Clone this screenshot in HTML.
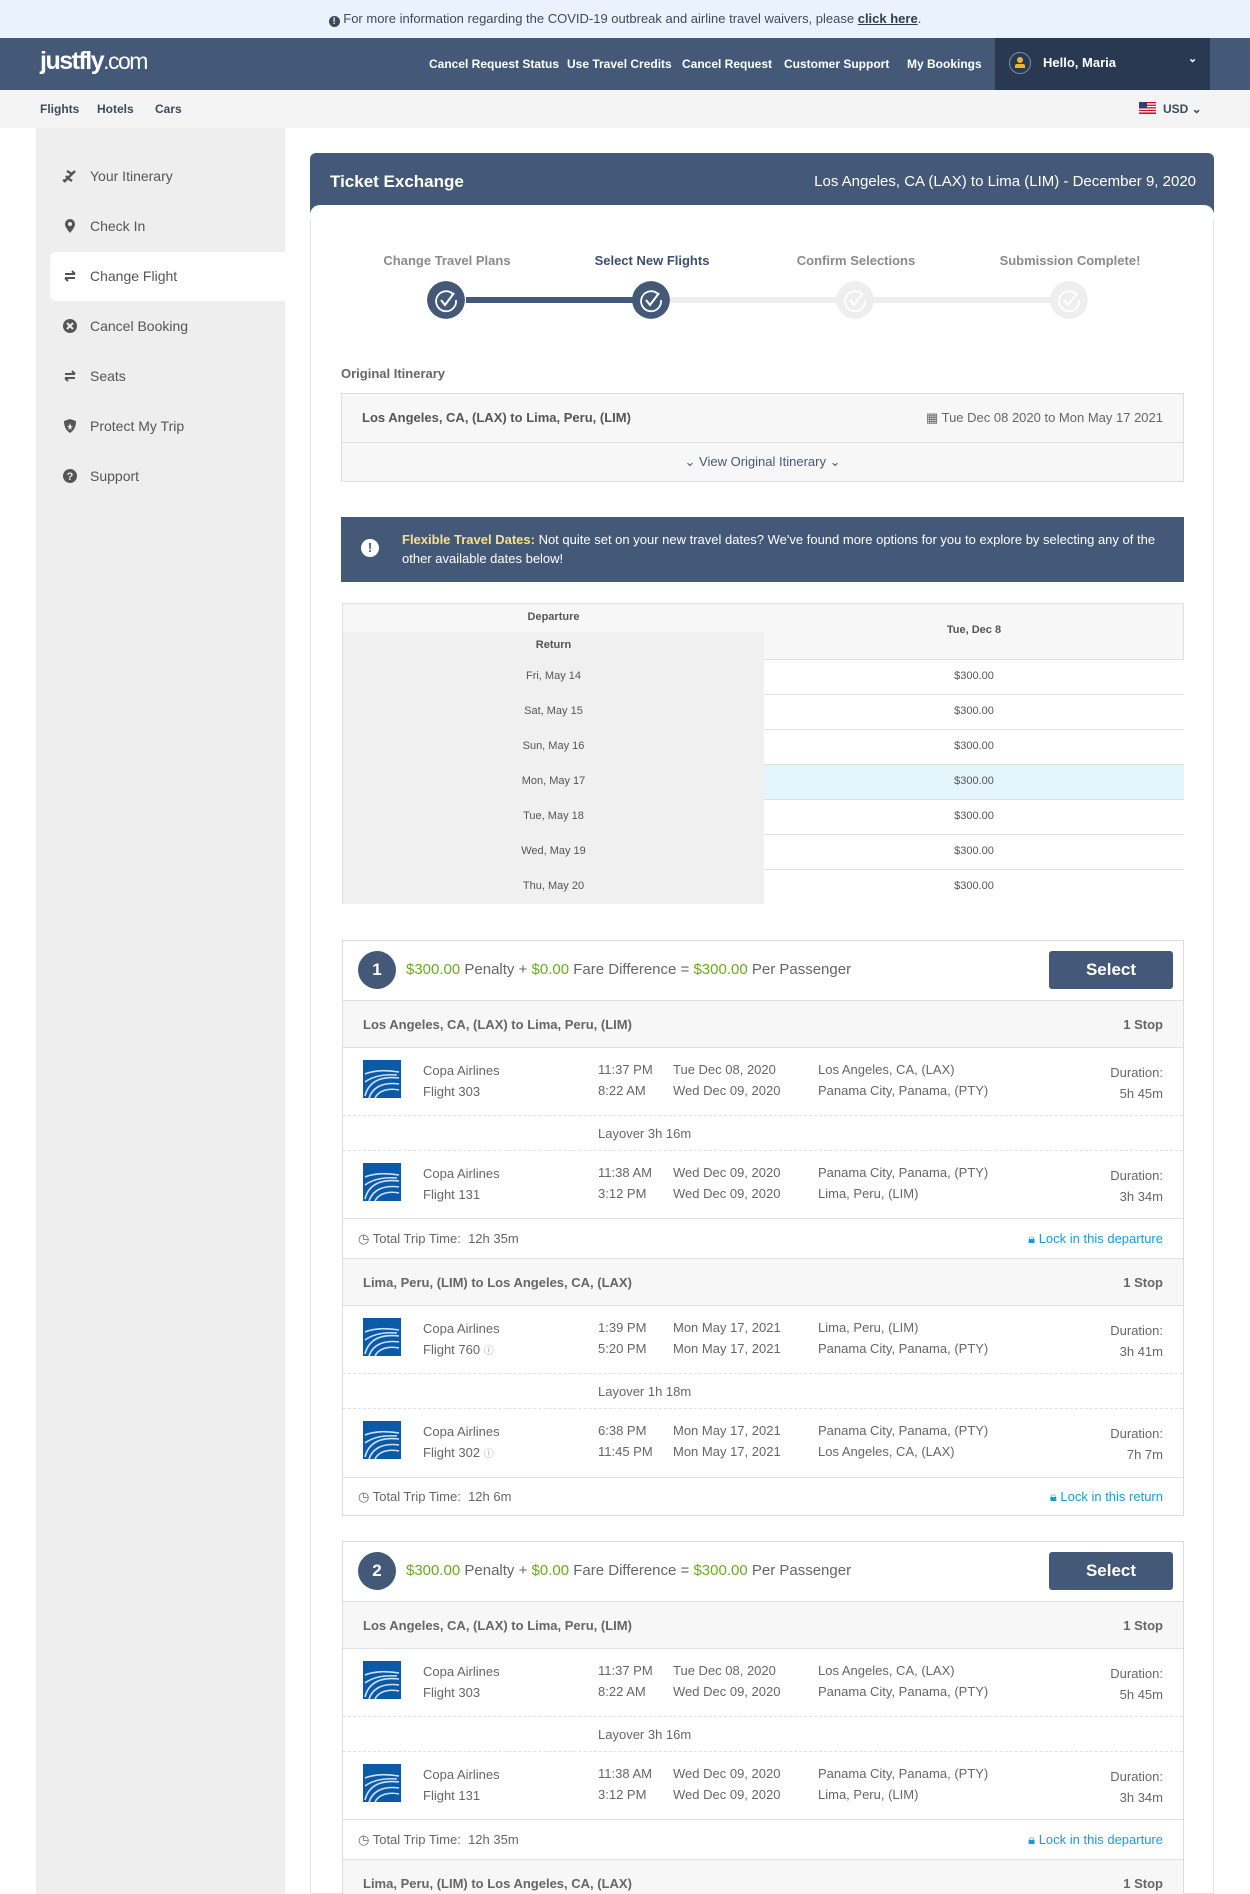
<!DOCTYPE html>
<html><head><meta charset="utf-8">
<style>
*{box-sizing:border-box;margin:0;padding:0}
html{width:1250px;height:1894px;overflow:hidden}
body{width:1250px;height:1894px;overflow:hidden;background:#fff;font-family:"Liberation Sans Narrow","Liberation Sans",sans-serif;color:#555;font-size:13px;position:relative}
.abs{position:absolute}
.banner{left:0;top:0;width:1250px;height:38px;background:#eaf3fd;color:#3d4a5c;font-size:13px;text-align:center;line-height:38px}
.banner b{text-decoration:underline;color:#2f3d52}
.nav{left:0;top:38px;width:1250px;height:52px;background:#445878}
.logo{left:40px;top:9px;color:#fff;font-family:"Liberation Sans",sans-serif;font-weight:bold;font-size:25px;letter-spacing:-1.5px}
.logo span{font-weight:normal;font-size:23px}
.nl{top:19px;color:#fff;font-weight:bold;font-size:12px}
.hello{left:995px;top:0;width:215px;height:52px;background:#2a3952;color:#fff;font-weight:bold;font-size:13px}
.sub{left:0;top:90px;width:1250px;height:38px;background:#f4f4f4;font-size:12px;color:#3d4a5c;font-weight:bold}
.side{left:36px;top:128px;width:249px;height:1766px;background:#eeeeee}
.si{left:90px;font-size:14px;color:#555}
.ic{left:62px;width:16px;height:16px}
.card{left:310px;top:153px;width:904px;height:1741px;border:1px solid #e4e4e4;border-radius:8px 8px 0 0;background:#fff}
.chead{left:310px;top:153px;width:904px;height:60px;background:#445878;border-radius:6px 6px 0 0;color:#fff}
.chead2{left:310px;top:205px;width:904px;height:14px;background:#fff;border-radius:10px 10px 0 0}
.stl{top:253px;font-weight:bold;font-size:13px;color:#8a8a8a;text-align:center;width:200px}
.circ{top:281px;width:38px;height:38px;border-radius:50%}
.box{border:1px solid #dedede;background:#f7f7f7}
.green{color:#6aaa1e}
.tbl{left:342px;top:603px;width:842px;height:301px;border:1px solid #e0e0e0}
.tc{position:absolute;text-align:center;font-size:11px;color:#555}
.opt{left:342px;width:842px;border:1px solid #dcdcdc;background:#fff;overflow:hidden}
.row{position:absolute;left:0;width:840px}
.gray{background:#f7f7f7;border-top:1px solid #e0e0e0;border-bottom:1px solid #e0e0e0}
.bold{font-weight:bold;color:#555}
.t{position:absolute;font-size:13px;color:#666;line-height:21px}
.lock{color:#1a9bd7}
.btn{position:absolute;right:10px;top:10px;width:124px;height:38px;background:#445878;border-radius:3px;color:#fff;font-weight:bold;font-size:17px;text-align:center;line-height:38px}
.num{position:absolute;left:15px;top:10px;width:38px;height:38px;border-radius:50%;background:#445878;color:#fff;font-size:17px;font-weight:bold;text-align:center;line-height:38px}
</style></head><body>

<div class="abs banner"><span style="display:inline-block;width:11px;height:11px;border-radius:50%;background:#3d4a5c;color:#fff;font-size:9px;line-height:11px;font-weight:bold;vertical-align:-1px">!</span> For more information regarding the COVID-19 outbreak and airline travel waivers, please <b>click here</b>.</div>

<div class="abs nav">
 <div class="abs logo">justfly<span>.com</span></div>
 <div class="abs nl" style="left:429px">Cancel Request Status</div>
 <div class="abs nl" style="left:567px">Use Travel Credits</div>
 <div class="abs nl" style="left:682px">Cancel Request</div>
 <div class="abs nl" style="left:784px">Customer Support</div>
 <div class="abs nl" style="left:907px">My Bookings</div>
 <div class="abs hello">
  <div class="abs" style="left:14px;top:14px;width:22px;height:22px;border:1px solid #8592a8;border-radius:50%"><div class="abs" style="left:7px;top:4px;width:6px;height:6px;background:#f0b429;border-radius:50%"></div><div class="abs" style="left:5px;top:11px;width:10px;height:4px;background:#f0b429;border-radius:2px 2px 0 0"></div></div>
  <div class="abs" style="left:48px;top:17px">Hello, Maria</div>
  <div class="abs" style="left:193px;top:14px;font-size:11px">&#8964;</div>
 </div>
</div>

<div class="abs sub">
 <div class="abs" style="left:40px;top:12px">Flights</div>
 <div class="abs" style="left:97px;top:12px">Hotels</div>
 <div class="abs" style="left:155px;top:12px">Cars</div>
 <svg class="abs" style="left:1139px;top:12px" width="17" height="12" viewBox="0 0 17 12"><rect width="17" height="12" fill="#fff"/><g fill="#c8102e"><rect y="0" width="17" height="1.3"/><rect y="2.6" width="17" height="1.3"/><rect y="5.2" width="17" height="1.3"/><rect y="7.8" width="17" height="1.3"/><rect y="10.4" width="17" height="1.6"/></g><rect width="8" height="6.5" fill="#3c3b6e"/></svg>
 <div class="abs" style="left:1163px;top:12px">USD &#8964;</div>
</div>

<div class="abs side"></div>
<div class="abs" style="left:50px;top:252px;width:235px;height:49px;background:#fff;border-radius:6px 0 0 6px"></div>
<svg class="abs ic" style="top:168px" viewBox="0 0 16 16"><path d="M2 14 L13 3 M5 3 L10 6 L7 9 M4 8 L7 11 L10 13 M3 12 L1 13" stroke="#555" stroke-width="2.4" fill="none"/></svg>
<div class="abs si" style="top:168px">Your Itinerary</div>
<svg class="abs ic" style="top:218px" viewBox="0 0 16 16"><path d="M8 15 C3 9 3 7 3 6 A5 5 0 0 1 13 6 C13 7 13 9 8 15Z" fill="#555"/><circle cx="8" cy="6" r="2" fill="#eee"/></svg>
<div class="abs si" style="top:218px">Check In</div>
<svg class="abs ic" style="top:268px" viewBox="0 0 16 16"><path d="M3 6 H13 M10 3 L13 6 M13 10 H3 M6 13 L3 10" stroke="#555" stroke-width="2" fill="none"/></svg>
<div class="abs si" style="top:268px">Change Flight</div>
<svg class="abs ic" style="top:318px" viewBox="0 0 16 16"><circle cx="8" cy="8" r="7" fill="#555"/><path d="M5 5 L11 11 M11 5 L5 11" stroke="#eee" stroke-width="2"/></svg>
<div class="abs si" style="top:318px">Cancel Booking</div>
<svg class="abs ic" style="top:368px" viewBox="0 0 16 16"><path d="M3 6 H13 M10 3 L13 6 M13 10 H3 M6 13 L3 10" stroke="#555" stroke-width="2" fill="none"/></svg>
<div class="abs si" style="top:368px">Seats</div>
<svg class="abs ic" style="top:418px" viewBox="0 0 16 16"><path d="M8 1 L14 3 C14 10 11 13 8 15 C5 13 2 10 2 3Z" fill="#555"/><path d="M8 5 L9 8 L11 8 L9 9.5 L10 12 L8 10.5 L6 12 L7 9.5 L5 8 L7 8Z" fill="#eee"/></svg>
<div class="abs si" style="top:418px">Protect My Trip</div>
<svg class="abs ic" style="top:468px" viewBox="0 0 16 16"><circle cx="8" cy="8" r="7" fill="#555"/><text x="8" y="12" font-size="11" font-weight="bold" fill="#eee" text-anchor="middle" font-family="Liberation Sans">?</text></svg>
<div class="abs si" style="top:468px">Support</div>

<div class="abs card"></div>
<div class="abs chead">
 <div class="abs" style="left:20px;top:19px;font-size:17px;font-weight:bold">Ticket Exchange</div>
 <div class="abs" style="right:18px;top:20px;font-size:15px">Los Angeles, CA (LAX) to Lima (LIM) - December 9, 2020</div>
</div>
<div class="abs chead2"></div>

<div class="abs" style="left:466px;top:297px;width:186px;height:6px;background:#445878"></div>
<div class="abs" style="left:652px;top:297px;width:418px;height:6px;background:#eeeeee"></div>
<div class="abs stl" style="left:347px">Change Travel Plans</div>
<div class="abs stl" style="left:552px;color:#3d4f6e">Select New Flights</div>
<div class="abs stl" style="left:756px">Confirm Selections</div>
<div class="abs stl" style="left:970px">Submission Complete!</div>
<svg class="abs circ" style="left:427px" viewBox="0 0 38 38"><circle cx="19" cy="19" r="19" fill="#445878"/><path d="M26 13 A10 10 0 1 0 29 19" stroke="#fff" stroke-width="1.8" fill="none"/><path d="M14 19 L18 24 L27 12" stroke="#fff" stroke-width="2" fill="none"/></svg>
<svg class="abs circ" style="left:632px" viewBox="0 0 38 38"><circle cx="19" cy="19" r="19" fill="#445878"/><path d="M26 13 A10 10 0 1 0 29 19" stroke="#fff" stroke-width="1.8" fill="none"/><path d="M14 19 L18 24 L27 12" stroke="#fff" stroke-width="2" fill="none"/></svg>
<svg class="abs circ" style="left:836px" viewBox="0 0 38 38"><circle cx="19" cy="19" r="19" fill="#eeeeee"/><path d="M26 13 A10 10 0 1 0 29 19" stroke="#fff" stroke-width="1.8" fill="none"/><path d="M14 19 L18 24 L27 12" stroke="#fff" stroke-width="2" fill="none"/></svg>
<svg class="abs circ" style="left:1050px" viewBox="0 0 38 38"><circle cx="19" cy="19" r="19" fill="#eeeeee"/><path d="M26 13 A10 10 0 1 0 29 19" stroke="#fff" stroke-width="1.8" fill="none"/><path d="M14 19 L18 24 L27 12" stroke="#fff" stroke-width="2" fill="none"/></svg>

<div class="abs" style="left:341px;top:366px;font-weight:bold;font-size:13px;color:#666">Original Itinerary</div>
<div class="abs box" style="left:341px;top:393px;width:843px;height:89px"></div>
<div class="abs" style="left:342px;top:442px;width:841px;height:1px;background:#dedede"></div>
<div class="abs bold" style="left:362px;top:410px">Los Angeles, CA, (LAX) to Lima, Peru, (LIM)</div>
<div class="abs" style="right:87px;top:410px;color:#666">&#9638; Tue Dec 08 2020 to Mon May 17 2021</div>
<div class="abs" style="left:342px;top:454px;width:841px;text-align:center;color:#445878">&#8964; View Original Itinerary &#8964;</div>

<div class="abs" style="left:341px;top:517px;width:843px;height:65px;background:#445878;color:#fff;font-size:13px">
 <div class="abs" style="left:20px;top:22px;width:18px;height:18px;border-radius:50%;background:#fff;color:#445878;font-weight:bold;text-align:center;line-height:18px">!</div>
 <div class="abs" style="left:61px;top:13px;width:770px;line-height:19px"><b style="color:#f8e08e">Flexible Travel Dates:</b> Not quite set on your new travel dates? We've found more options for you to explore by selecting any of the other available dates below!</div>
</div>

<div class="abs tbl">
 <div class="abs" style="left:0;top:0;width:840px;height:55px;background:#f7f7f7"></div>
 <div class="abs" style="left:0;top:28px;width:421px;height:272px;background:#f0f0f0"></div>
 <div class="tc" style="left:0;top:7px;width:421px;font-weight:bold">Departure</div>
 <div class="tc" style="left:0;top:35px;width:421px;font-weight:bold">Return</div>
 <div class="tc" style="left:421px;top:20px;width:420px;font-weight:bold">Tue, Dec 8</div>
 <div class="abs" style="left:421px;top:55px;width:420px;height:245px;background:#fff"></div>
 <div class="abs" style="left:421px;top:160px;width:420px;height:35px;background:#e5f5fc"></div>
 <div class="abs" style="left:421px;top:55px;width:420px;height:1px;background:#e0e0e0"></div>
 <div class="abs" style="left:421px;top:90px;width:420px;height:1px;background:#e0e0e0"></div>
 <div class="abs" style="left:421px;top:125px;width:420px;height:1px;background:#e0e0e0"></div>
 <div class="abs" style="left:421px;top:160px;width:420px;height:1px;background:#e0e0e0"></div>
 <div class="abs" style="left:421px;top:195px;width:420px;height:1px;background:#e0e0e0"></div>
 <div class="abs" style="left:421px;top:230px;width:420px;height:1px;background:#e0e0e0"></div>
 <div class="abs" style="left:421px;top:265px;width:420px;height:1px;background:#e0e0e0"></div>
 <div class="tc" style="left:0;top:66px;width:421px">Fri, May 14</div><div class="tc" style="left:421px;top:66px;width:420px">$300.00</div>
 <div class="tc" style="left:0;top:101px;width:421px">Sat, May 15</div><div class="tc" style="left:421px;top:101px;width:420px">$300.00</div>
 <div class="tc" style="left:0;top:136px;width:421px">Sun, May 16</div><div class="tc" style="left:421px;top:136px;width:420px">$300.00</div>
 <div class="tc" style="left:0;top:171px;width:421px">Mon, May 17</div><div class="tc" style="left:421px;top:171px;width:420px">$300.00</div>
 <div class="tc" style="left:0;top:206px;width:421px">Tue, May 18</div><div class="tc" style="left:421px;top:206px;width:420px">$300.00</div>
 <div class="tc" style="left:0;top:241px;width:421px">Wed, May 19</div><div class="tc" style="left:421px;top:241px;width:420px">$300.00</div>
 <div class="tc" style="left:0;top:276px;width:421px">Thu, May 20</div><div class="tc" style="left:421px;top:276px;width:420px">$300.00</div>
</div>

<!-- OPTION 1 -->
<div class="abs opt" style="top:940px;height:576px">
 <div class="num">1</div>
 <div class="t" style="left:63px;top:18px;font-size:15px"><span class="green">$300.00</span> Penalty + <span class="green">$0.00</span> Fare Difference = <span class="green">$300.00</span> Per Passenger</div>
 <div class="btn">Select</div>
 <div class="row gray" style="top:59px;height:48px"><div class="t bold" style="left:20px;top:13px">Los Angeles, CA, (LAX) to Lima, Peru, (LIM)</div><div class="t bold" style="right:20px;top:13px">1 Stop</div></div>
 <div class="row" style="top:107px;height:68px;border-bottom:1px dashed #e0e0e0">
  <svg class="abs" style="left:20px;top:12px" width="38" height="38" viewBox="0 0 38 38"><rect width="38" height="38" fill="#0a5aa8"/><path d="M2 36 C6 20 20 16 36 18 M6 38 C10 26 22 22 36 24 M12 38 C16 30 26 28 36 30 M2 14 C12 10 24 10 36 12 M2 22 C10 16 22 14 34 15" stroke="#cfe2f5" stroke-width="1.6" fill="none"/></svg>
  <div class="t" style="left:80px;top:12px">Copa Airlines<br>Flight 303</div>
  <div class="t" style="left:255px;top:11px">11:37 PM<br>8:22 AM</div>
  <div class="t" style="left:330px;top:11px">Tue Dec 08, 2020<br>Wed Dec 09, 2020</div>
  <div class="t" style="left:475px;top:11px">Los Angeles, CA, (LAX)<br>Panama City, Panama, (PTY)</div>
  <div class="t" style="right:20px;top:14px;text-align:right">Duration:<br>5h 45m</div>
 </div>
 <div class="row" style="top:175px;height:35px;border-bottom:1px dashed #e0e0e0"><div class="t" style="left:255px;top:7px">Layover 3h 16m</div></div>
 <div class="row" style="top:210px;height:67px">
  <svg class="abs" style="left:20px;top:12px" width="38" height="38" viewBox="0 0 38 38"><rect width="38" height="38" fill="#0a5aa8"/><path d="M2 36 C6 20 20 16 36 18 M6 38 C10 26 22 22 36 24 M12 38 C16 30 26 28 36 30 M2 14 C12 10 24 10 36 12 M2 22 C10 16 22 14 34 15" stroke="#cfe2f5" stroke-width="1.6" fill="none"/></svg>
  <div class="t" style="left:80px;top:12px">Copa Airlines<br>Flight 131</div>
  <div class="t" style="left:255px;top:11px">11:38 AM<br>3:12 PM</div>
  <div class="t" style="left:330px;top:11px">Wed Dec 09, 2020<br>Wed Dec 09, 2020</div>
  <div class="t" style="left:475px;top:11px">Panama City, Panama, (PTY)<br>Lima, Peru, (LIM)</div>
  <div class="t" style="right:20px;top:14px;text-align:right">Duration:<br>3h 34m</div>
 </div>
 <div class="row" style="top:277px;height:40px;border-top:1px solid #e0e0e0"><div class="t" style="left:15px;top:9px">&#9719; Total Trip Time:&nbsp; 12h 35m</div><div class="t lock" style="right:20px;top:9px">&#128274;&#xFE0E; Lock in this departure</div></div>
 <div class="row gray" style="top:317px;height:48px"><div class="t bold" style="left:20px;top:13px">Lima, Peru, (LIM) to Los Angeles, CA, (LAX)</div><div class="t bold" style="right:20px;top:13px">1 Stop</div></div>
 <div class="row" style="top:365px;height:68px;border-bottom:1px dashed #e0e0e0">
  <svg class="abs" style="left:20px;top:12px" width="38" height="38" viewBox="0 0 38 38"><rect width="38" height="38" fill="#0a5aa8"/><path d="M2 36 C6 20 20 16 36 18 M6 38 C10 26 22 22 36 24 M12 38 C16 30 26 28 36 30 M2 14 C12 10 24 10 36 12 M2 22 C10 16 22 14 34 15" stroke="#cfe2f5" stroke-width="1.6" fill="none"/></svg>
  <div class="t" style="left:80px;top:12px">Copa Airlines<br>Flight 760 <span style="font-size:10px;color:#999">&#9432;</span></div>
  <div class="t" style="left:255px;top:11px">1:39 PM<br>5:20 PM</div>
  <div class="t" style="left:330px;top:11px">Mon May 17, 2021<br>Mon May 17, 2021</div>
  <div class="t" style="left:475px;top:11px">Lima, Peru, (LIM)<br>Panama City, Panama, (PTY)</div>
  <div class="t" style="right:20px;top:14px;text-align:right">Duration:<br>3h 41m</div>
 </div>
 <div class="row" style="top:433px;height:35px;border-bottom:1px dashed #e0e0e0"><div class="t" style="left:255px;top:7px">Layover 1h 18m</div></div>
 <div class="row" style="top:468px;height:68px">
  <svg class="abs" style="left:20px;top:12px" width="38" height="38" viewBox="0 0 38 38"><rect width="38" height="38" fill="#0a5aa8"/><path d="M2 36 C6 20 20 16 36 18 M6 38 C10 26 22 22 36 24 M12 38 C16 30 26 28 36 30 M2 14 C12 10 24 10 36 12 M2 22 C10 16 22 14 34 15" stroke="#cfe2f5" stroke-width="1.6" fill="none"/></svg>
  <div class="t" style="left:80px;top:12px">Copa Airlines<br>Flight 302 <span style="font-size:10px;color:#999">&#9432;</span></div>
  <div class="t" style="left:255px;top:11px">6:38 PM<br>11:45 PM</div>
  <div class="t" style="left:330px;top:11px">Mon May 17, 2021<br>Mon May 17, 2021</div>
  <div class="t" style="left:475px;top:11px">Panama City, Panama, (PTY)<br>Los Angeles, CA, (LAX)</div>
  <div class="t" style="right:20px;top:14px;text-align:right">Duration:<br>7h 7m</div>
 </div>
 <div class="row" style="top:536px;height:38px;border-top:1px solid #e0e0e0"><div class="t" style="left:15px;top:8px">&#9719; Total Trip Time:&nbsp; 12h 6m</div><div class="t lock" style="right:20px;top:8px">&#128274;&#xFE0E; Lock in this return</div></div>
</div>

<!-- OPTION 2 -->
<div class="abs opt" style="top:1541px;height:353px;border-bottom:none">
 <div class="num">2</div>
 <div class="t" style="left:63px;top:18px;font-size:15px"><span class="green">$300.00</span> Penalty + <span class="green">$0.00</span> Fare Difference = <span class="green">$300.00</span> Per Passenger</div>
 <div class="btn">Select</div>
 <div class="row gray" style="top:59px;height:48px"><div class="t bold" style="left:20px;top:13px">Los Angeles, CA, (LAX) to Lima, Peru, (LIM)</div><div class="t bold" style="right:20px;top:13px">1 Stop</div></div>
 <div class="row" style="top:107px;height:68px;border-bottom:1px dashed #e0e0e0">
  <svg class="abs" style="left:20px;top:12px" width="38" height="38" viewBox="0 0 38 38"><rect width="38" height="38" fill="#0a5aa8"/><path d="M2 36 C6 20 20 16 36 18 M6 38 C10 26 22 22 36 24 M12 38 C16 30 26 28 36 30 M2 14 C12 10 24 10 36 12 M2 22 C10 16 22 14 34 15" stroke="#cfe2f5" stroke-width="1.6" fill="none"/></svg>
  <div class="t" style="left:80px;top:12px">Copa Airlines<br>Flight 303</div>
  <div class="t" style="left:255px;top:11px">11:37 PM<br>8:22 AM</div>
  <div class="t" style="left:330px;top:11px">Tue Dec 08, 2020<br>Wed Dec 09, 2020</div>
  <div class="t" style="left:475px;top:11px">Los Angeles, CA, (LAX)<br>Panama City, Panama, (PTY)</div>
  <div class="t" style="right:20px;top:14px;text-align:right">Duration:<br>5h 45m</div>
 </div>
 <div class="row" style="top:175px;height:35px;border-bottom:1px dashed #e0e0e0"><div class="t" style="left:255px;top:7px">Layover 3h 16m</div></div>
 <div class="row" style="top:210px;height:67px">
  <svg class="abs" style="left:20px;top:12px" width="38" height="38" viewBox="0 0 38 38"><rect width="38" height="38" fill="#0a5aa8"/><path d="M2 36 C6 20 20 16 36 18 M6 38 C10 26 22 22 36 24 M12 38 C16 30 26 28 36 30 M2 14 C12 10 24 10 36 12 M2 22 C10 16 22 14 34 15" stroke="#cfe2f5" stroke-width="1.6" fill="none"/></svg>
  <div class="t" style="left:80px;top:12px">Copa Airlines<br>Flight 131</div>
  <div class="t" style="left:255px;top:11px">11:38 AM<br>3:12 PM</div>
  <div class="t" style="left:330px;top:11px">Wed Dec 09, 2020<br>Wed Dec 09, 2020</div>
  <div class="t" style="left:475px;top:11px">Panama City, Panama, (PTY)<br>Lima, Peru, (LIM)</div>
  <div class="t" style="right:20px;top:14px;text-align:right">Duration:<br>3h 34m</div>
 </div>
 <div class="row" style="top:277px;height:40px;border-top:1px solid #e0e0e0"><div class="t" style="left:15px;top:9px">&#9719; Total Trip Time:&nbsp; 12h 35m</div><div class="t lock" style="right:20px;top:9px">&#128274;&#xFE0E; Lock in this departure</div></div>
 <div class="row gray" style="top:317px;height:48px"><div class="t bold" style="left:20px;top:13px">Lima, Peru, (LIM) to Los Angeles, CA, (LAX)</div><div class="t bold" style="right:20px;top:13px">1 Stop</div></div>
</div>

</body></html>
